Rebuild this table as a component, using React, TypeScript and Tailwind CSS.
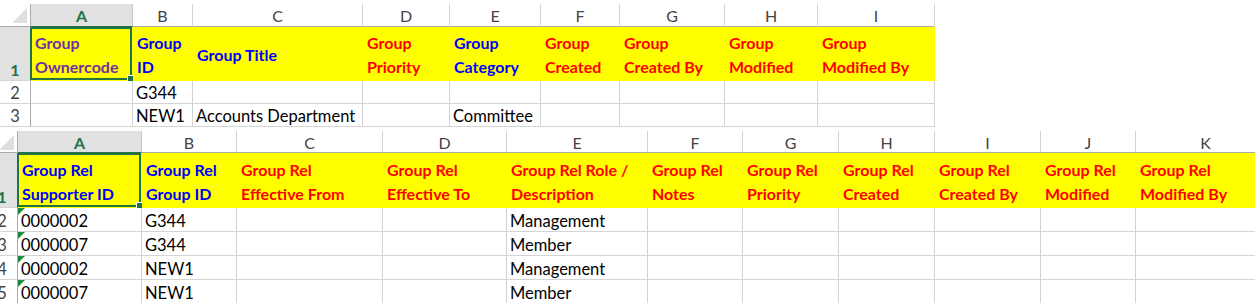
import React from "react";

type Col = { letter: string; w: string };
type Head = { lines: string[]; color: string };

const BLUE = "text-[#0000ff]";
const RED = "text-[#ff0000]";
const PURPLE = "text-[#7030a0]";

const topCols: Col[] = [
  { letter: "A", w: "w-[102px]" },
  { letter: "B", w: "w-[60px]" },
  { letter: "C", w: "w-[170px]" },
  { letter: "D", w: "w-[87px]" },
  { letter: "E", w: "w-[91px]" },
  { letter: "F", w: "w-[79px]" },
  { letter: "G", w: "w-[105px]" },
  { letter: "H", w: "w-[93px]" },
  { letter: "I", w: "w-[117px]" },
];

const topHeads: Head[] = [
  { lines: ["Group", "Ownercode"], color: PURPLE },
  { lines: ["Group", "ID"], color: BLUE },
  { lines: ["Group Title"], color: BLUE },
  { lines: ["Group", "Priority"], color: RED },
  { lines: ["Group", "Category"], color: BLUE },
  { lines: ["Group", "Created"], color: RED },
  { lines: ["Group", "Created By"], color: RED },
  { lines: ["Group", "Modified"], color: RED },
  { lines: ["Group", "Modified By"], color: RED },
];

const topData = [
  ["", "G344", "", "", "", "", "", "", ""],
  ["", "NEW1", "Accounts Department", "", "Committee", "", "", "", ""],
];

const relCols: Col[] = [
  { letter: "A", w: "w-[124px]" },
  { letter: "B", w: "w-[95px]" },
  { letter: "C", w: "w-[146px]" },
  { letter: "D", w: "w-[124px]" },
  { letter: "E", w: "w-[141px]" },
  { letter: "F", w: "w-[95px]" },
  { letter: "G", w: "w-[96px]" },
  { letter: "H", w: "w-[96px]" },
  { letter: "I", w: "w-[106px]" },
  { letter: "J", w: "w-[95px]" },
  { letter: "K", w: "w-[140px]" },
];

const relHeads: Head[] = [
  { lines: ["Group Rel", "Supporter ID"], color: BLUE },
  { lines: ["Group Rel", "Group ID"], color: BLUE },
  { lines: ["Group Rel", "Effective From"], color: RED },
  { lines: ["Group Rel", "Effective To"], color: RED },
  { lines: ["Group Rel Role /", "Description"], color: RED },
  { lines: ["Group Rel", "Notes"], color: RED },
  { lines: ["Group Rel", "Priority"], color: RED },
  { lines: ["Group Rel", "Created"], color: RED },
  { lines: ["Group Rel", "Created By"], color: RED },
  { lines: ["Group Rel", "Modified"], color: RED },
  { lines: ["Group Rel", "Modified By"], color: RED },
];

const relData = [
  ["0000002", "G344", "", "", "Management", "", "", "", "", "", ""],
  ["0000007", "G344", "", "", "Member", "", "", "", "", "", ""],
  ["0000002", "NEW1", "", "", "Management", "", "", "", "", "", ""],
  ["0000007", "NEW1", "", "", "Member", "", "", "", "", "", ""],
];

type SheetProps = {
  cols: Col[];
  heads: Head[];
  data: string[][];
  height: string;
  shift: string;
  headH: string;
  row1H: string;
  rowH: string;
  textMarks?: boolean;
};

function Sheet({ cols, heads, data, height, shift, headH, row1H, rowH, textMarks }: SheetProps) {
  return (
    <div className={`overflow-hidden bg-white pt-[4px] ${height}`}>
      <div className={`w-max ${shift}`}>
        {/* column letters */}
        <div className={`flex ${headH}`}>
          <div className="relative w-[31px] shrink-0 border-b border-r border-[#ababab] bg-white">
            <svg className="absolute left-0 top-0" width="31" height="23" viewBox="0 0 31 23">
              <polygon points="27,4 27,19 12,19" fill="#dfdfdf" />
            </svg>
          </div>
          {cols.map((c, i) => (
            <div
              key={c.letter}
              className={`${c.w} shrink-0 flex items-center justify-center border-b pt-[2px] text-[16px] ${
                i === 0
                  ? "bg-[#e1e1e1] border-r border-r-[#c6c6c6] border-b-[#217346] font-bold text-[#217346]"
                  : "bg-white border-r border-r-[#d4d4d4] border-b-[#ababab] text-[#444444]"
              }`}
            >
              {c.letter}
            </div>
          ))}
        </div>

        {/* header row */}
        <div className={`flex ${row1H}`}>
          <div className="w-[31px] shrink-0 flex items-end justify-center border-b border-r border-b-[#d4d4d4] border-r-[#217346] bg-[#e1e1e1] text-[16px] font-bold leading-[20px] text-[#217346]">
            1
          </div>
          {heads.map((h, i) => (
            <div
              key={i}
              className={`${cols[i].w} relative shrink-0 flex flex-col justify-center border-b border-r border-[#ffff00] bg-[#ffff00] pl-[4px] pt-[3px] text-[16px] font-bold leading-[24px] whitespace-nowrap ${h.color}`}
            >
              {h.lines.map((l) => (
                <span key={l}>{l}</span>
              ))}
              {i === 0 && (
                <div className="absolute -left-[1px] top-0 right-0 bottom-0 border-2 border-[#217346]">
                  <div className="absolute -right-[4px] -bottom-[4px] h-[7px] w-[7px] border border-white bg-[#217346]" />
                </div>
              )}
            </div>
          ))}
        </div>

        {/* data rows */}
        {data.map((row, r) => (
          <div key={r} className={`flex ${rowH}`}>
            <div className="w-[31px] shrink-0 flex items-end justify-center border-b border-r border-b-[#d4d4d4] border-r-[#ababab] bg-white text-[16.5px] leading-[20px] text-[#444444]">
              {r + 2}
            </div>
            {row.map((v, i) => (
              <div
                key={i}
                className={`${cols[i].w} relative shrink-0 flex items-end border-b border-r border-[#d4d4d4] bg-white px-[3px] text-[16.5px] leading-[20px] whitespace-nowrap text-black`}
              >
                {textMarks && i === 0 && (
                  <svg className="absolute left-0 top-0" width="7" height="7" viewBox="0 0 7 7">
                    <polygon points="0,0 7,0 0,7" fill="#1e8a3c" />
                  </svg>
                )}
                {v}
              </div>
            ))}
          </div>
        ))}
      </div>
    </div>
  );
}

export default function App() {
  return (
    <div className="w-[1255px] h-[303px] overflow-hidden bg-white font-['Lato',sans-serif]">
      <Sheet
        cols={topCols}
        heads={topHeads}
        data={topData}
        height="h-[127px]"
        shift="ml-0"
        headH="h-[23px]"
        row1H="h-[54px]"
        rowH="h-[23px]"
      />
      <Sheet
        cols={relCols}
        heads={relHeads}
        data={relData}
        height="h-[176px]"
        shift="-ml-[13px]"
        headH="h-[22px]"
        row1H="h-[55px]"
        rowH="h-[24px]"
        textMarks
      />
    </div>
  );
}
